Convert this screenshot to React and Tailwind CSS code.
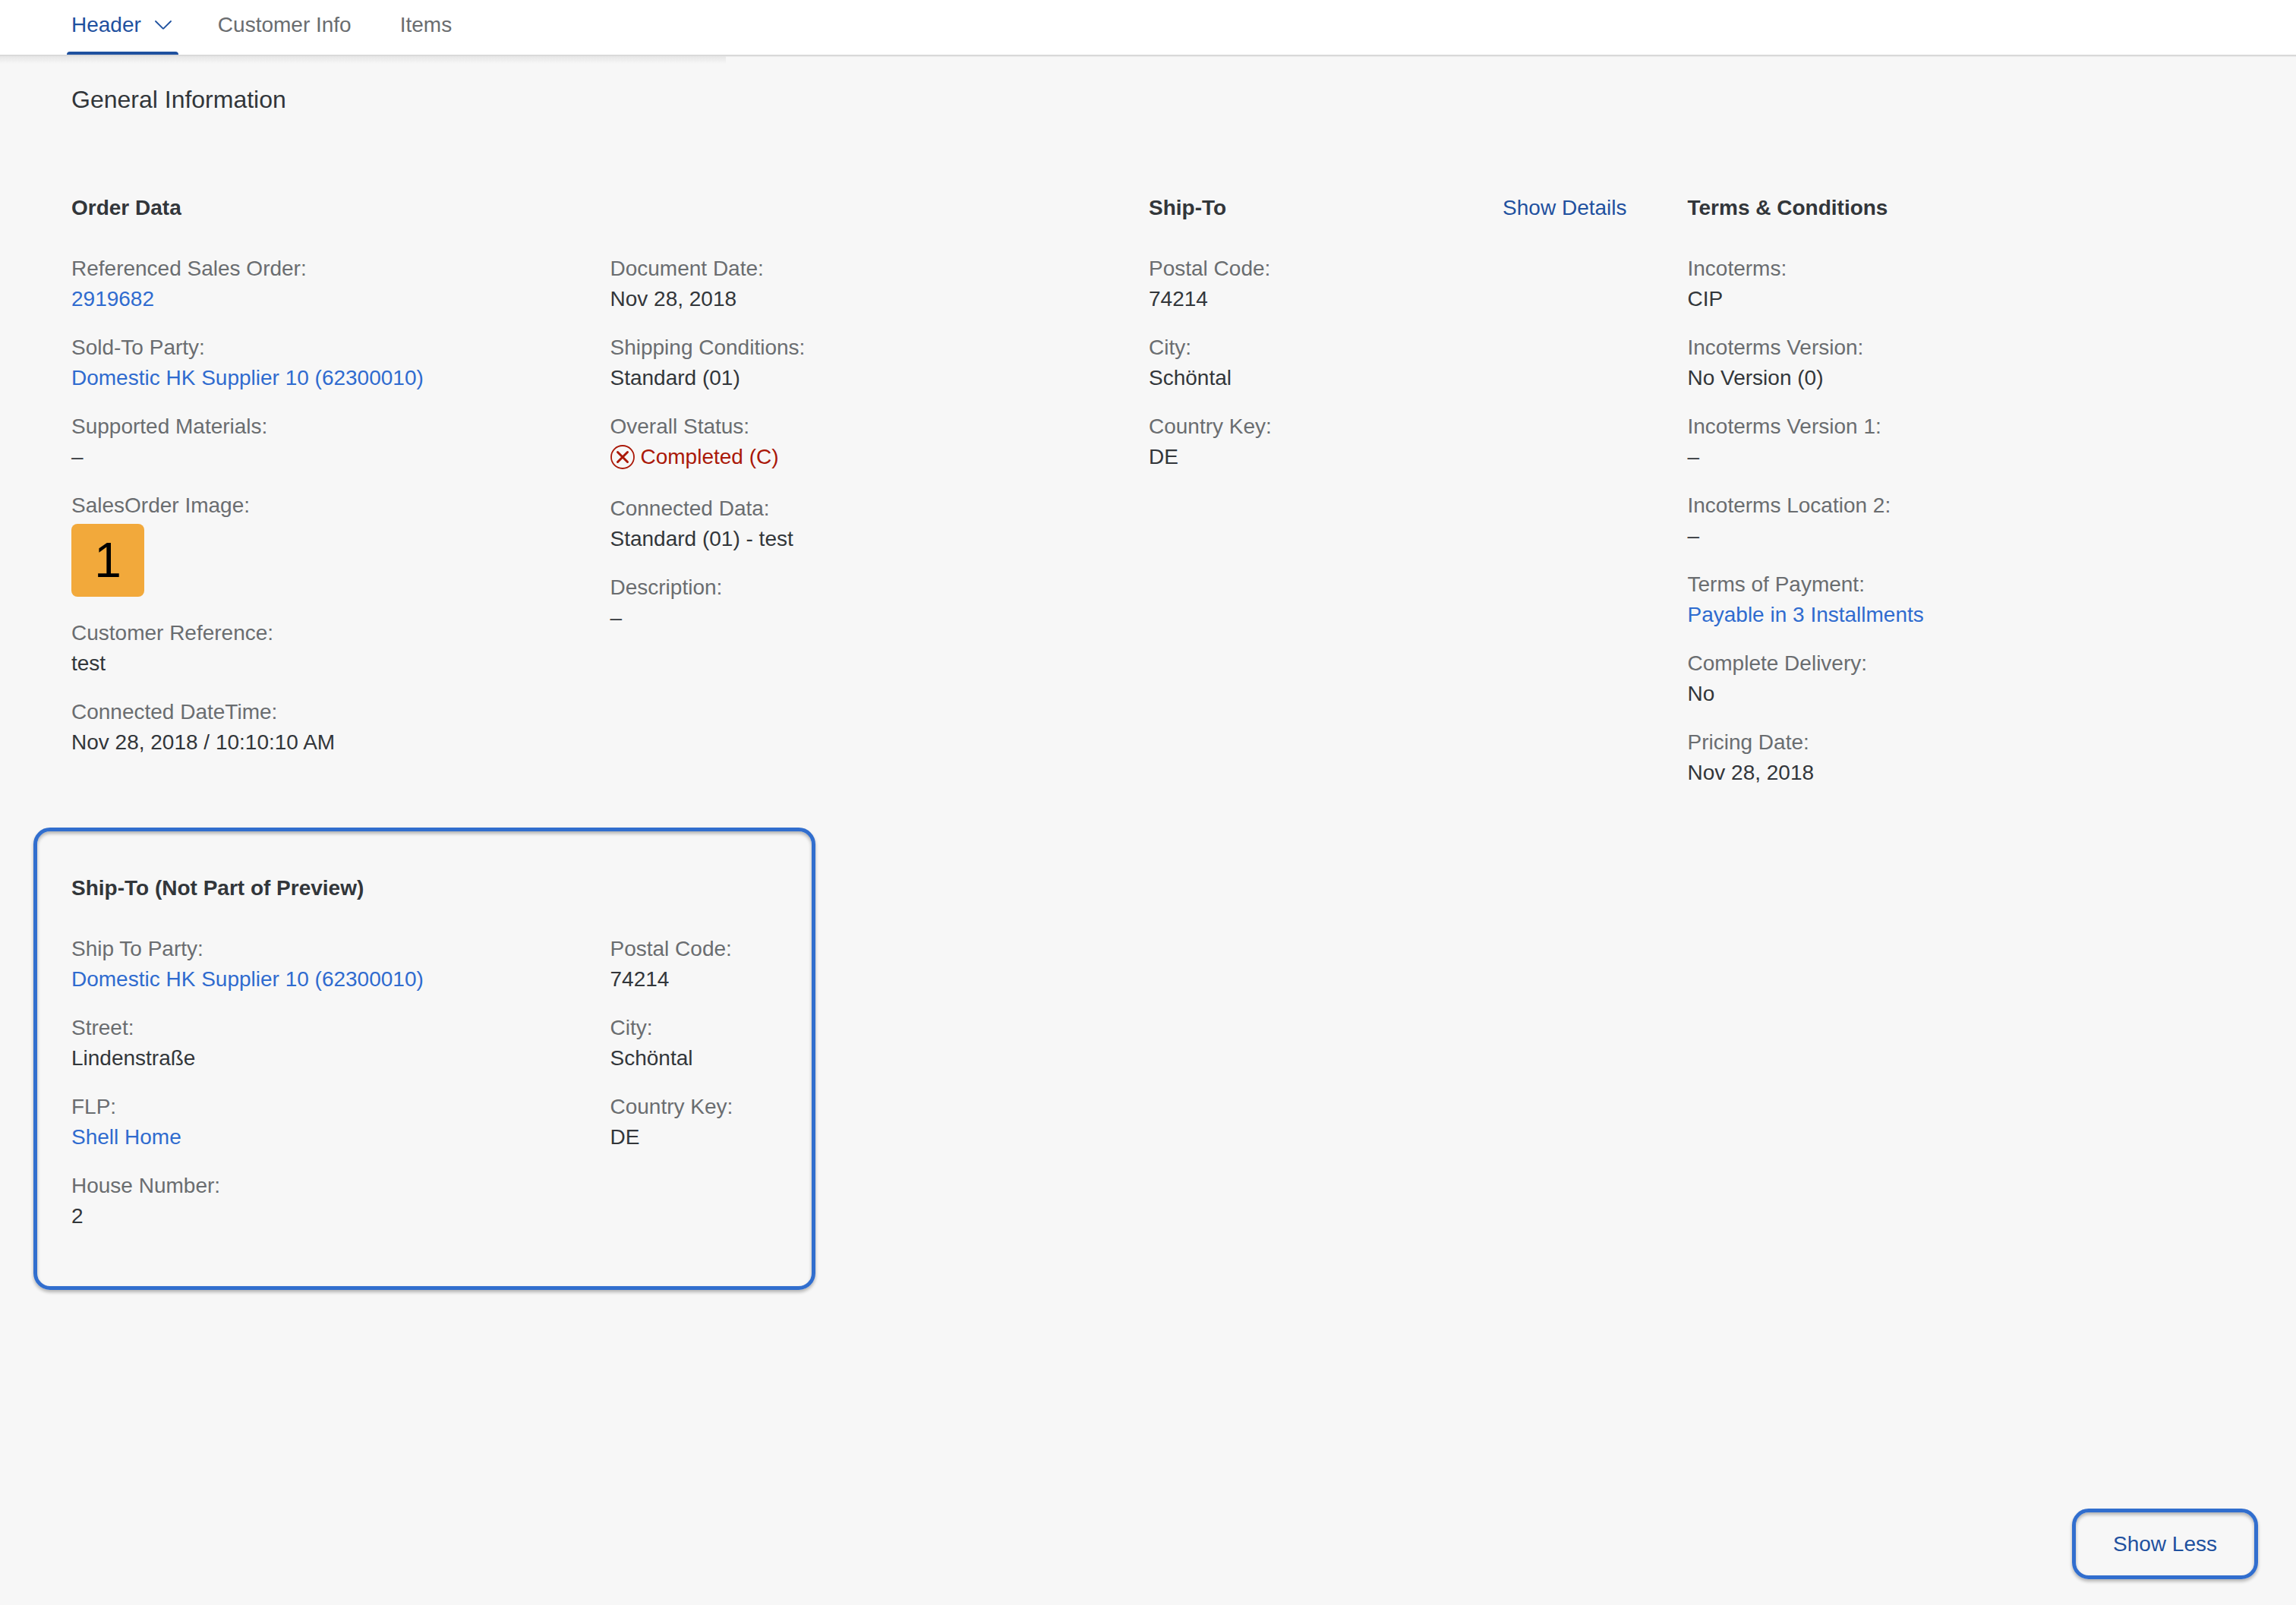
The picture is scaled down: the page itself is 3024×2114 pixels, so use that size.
const LINK = "text-[#2f6bcf] hover:underline";

function Field({ label, children, tall }) {
  return (
    <div className={tall ? "pb-7" : "pb-6"}>
      <dt className="text-[#6a6d70]">{label}:</dt>
      <dd className="text-[#32363a]">{children ?? "–"}</dd>
    </div>
  );
}

function Fields({ children }) {
  return <dl className="min-w-0">{children}</dl>;
}

function GroupTitle({ children }) {
  return <h3 className="font-bold text-[#32363a]">{children}</h3>;
}

function ErrorIcon() {
  return (
    <svg className="size-8 shrink-0" viewBox="0 0 32 32" fill="none" stroke="currentColor" aria-hidden="true">
      <circle cx="16" cy="16" r="15" strokeWidth="1.8" />
      <path d="M9.5 9.5l13 13M22.5 9.5l-13 13" strokeWidth="3" strokeLinecap="round" />
    </svg>
  );
}

function ChevronDown() {
  return (
    <svg className="h-3 w-[22px]" viewBox="0 0 22 12" fill="none" stroke="currentColor" strokeWidth="1.8" strokeLinecap="round" strokeLinejoin="round" aria-hidden="true">
      <path d="M1 1l9.2 9.2q.8.7 1.6 0L21 1" />
    </svg>
  );
}

export default function App() {
  return (
    <div className="flex min-h-screen flex-col bg-[#f7f7f7] font-['Liberation_Sans',Arial,sans-serif] text-[28px] leading-10 text-[#32363a]">
      <header className="relative border-b-2 border-[#d9d9d9] bg-white shadow-[0_1px_0_#ececec]">
        <nav className="flex h-[72px] gap-10 pl-[88px] text-[#6a6d70]" aria-label="Sections">
          <button type="button" className="flex flex-col text-[#1f519f]">
            <span className="flex h-[68px] items-center gap-[18px] pb-0.5 pl-1.5 pr-[9px]">
              Header
              <ChevronDown />
            </span>
            <span className="h-1 w-full rounded-t bg-[#1f519f]" />
          </button>
          <button type="button" className="h-[68px] px-3 pb-0.5">Customer Info</button>
          <button type="button" className="h-[68px] px-3 pb-0.5">Items</button>
        </nav>
        <div className="absolute left-0 top-full mt-0.5 h-2.5 w-[956px] bg-linear-to-b from-[#e6e6e6] to-[#f7f7f7]" />
      </header>

      <main className="flex grow flex-col pl-[94px] pr-[92px]">
        <h2 className="pt-[37px] text-[32px] leading-10">General Information</h2>

        <div className="grid grid-cols-4 pt-[103px]">
          <section className="col-span-2 flex flex-col gap-10">
            <GroupTitle>Order Data</GroupTitle>
            <div className="grid grid-cols-2">
              <Fields>
                <Field label="Referenced Sales Order"><a href="#order" className={LINK}>2919682</a></Field>
                <Field label="Sold-To Party"><a href="#sold-to" className={LINK}>Domestic HK Supplier 10 (62300010)</a></Field>
                <Field label="Supported Materials" />
                <Field label="SalesOrder Image" tall>
                  <span className="mt-1 flex size-24 items-center justify-center rounded-lg bg-[#f2a93b] text-[64px] leading-none text-black">1</span>
                </Field>
                <Field label="Customer Reference">test</Field>
                <Field label="Connected DateTime">Nov 28, 2018 / 10:10:10 AM</Field>
              </Fields>
              <Fields>
                <Field label="Document Date">Nov 28, 2018</Field>
                <Field label="Shipping Conditions">Standard (01)</Field>
                <Field label="Overall Status" tall>
                  <span className="flex items-center gap-2 text-[#aa1808]"><ErrorIcon />Completed (C)</span>
                </Field>
                <Field label="Connected Data">Standard (01) - test</Field>
                <Field label="Description" />
              </Fields>
            </div>
          </section>

          <section className="flex flex-col gap-10">
            <div className="flex justify-between pr-20">
              <GroupTitle>Ship-To</GroupTitle>
              <button type="button" className="text-[#1f519f]">Show Details</button>
            </div>
            <Fields>
              <Field label="Postal Code">74214</Field>
              <Field label="City">Schöntal</Field>
              <Field label="Country Key">DE</Field>
            </Fields>
          </section>

          <section className="flex flex-col gap-10">
            <GroupTitle>Terms &amp; Conditions</GroupTitle>
            <Fields>
              <Field label="Incoterms">CIP</Field>
              <Field label="Incoterms Version">No Version (0)</Field>
              <Field label="Incoterms Version 1" />
              <Field label="Incoterms Location 2" />
              <Field label="Terms of Payment"><a href="#payment" className={LINK}>Payable in 3 Installments</a></Field>
              <Field label="Complete Delivery">No</Field>
              <Field label="Pricing Date">Nov 28, 2018</Field>
            </Fields>
          </section>
        </div>

        <section className="relative mt-7 flex flex-col gap-10 pb-[53px] pt-[60px]">
          <div className="pointer-events-none absolute inset-y-0 -left-[50px] w-[36.3%] rounded-[22px] border-[5px] border-[#316ece] shadow-[0_3px_4px_rgba(0,0,0,0.28),inset_0_3px_4px_rgba(0,0,0,0.28)]" />
          <GroupTitle>Ship-To (Not Part of Preview)</GroupTitle>
          <div className="grid grid-cols-4">
            <Fields>
              <Field label="Ship To Party"><a href="#ship-to" className={LINK}>Domestic HK Supplier 10 (62300010)</a></Field>
              <Field label="Street">Lindenstraße</Field>
              <Field label="FLP"><a href="#home" className={LINK}>Shell Home</a></Field>
              <Field label="House Number">2</Field>
            </Fields>
            <Fields>
              <Field label="Postal Code">74214</Field>
              <Field label="City">Schöntal</Field>
              <Field label="Country Key">DE</Field>
            </Fields>
          </div>
        </section>
      </main>

      <footer className="flex justify-end pb-[34px] pr-[50px]">
        <button type="button" className="h-[93px] rounded-[22px] border-[5px] border-[#316ece] px-[49px] text-[#1f519f] shadow-[0_3px_4px_rgba(0,0,0,0.28),inset_0_3px_4px_rgba(0,0,0,0.28)]">
          Show Less
        </button>
      </footer>
    </div>
  );
}
